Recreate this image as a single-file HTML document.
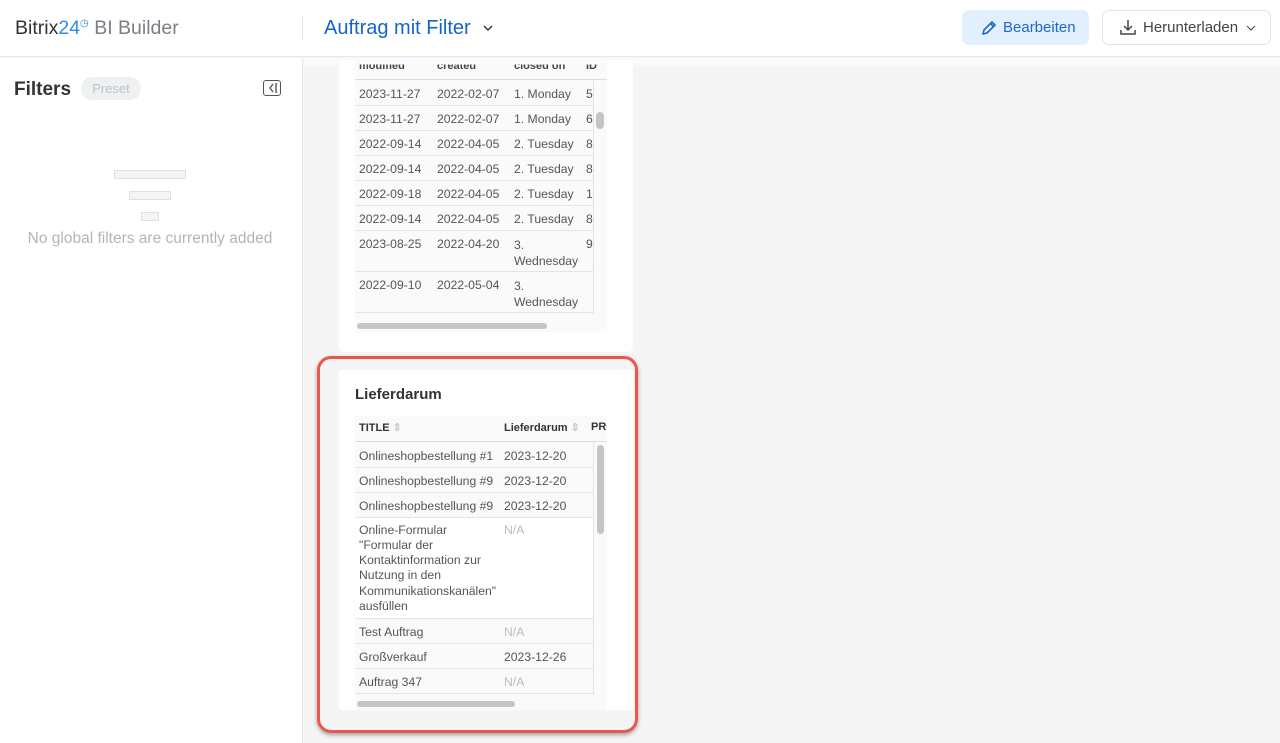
<!DOCTYPE html>
<html><head><meta charset="utf-8"><style>
*{box-sizing:border-box;margin:0;padding:0}
body{width:1280px;height:743px;overflow:hidden;font-family:"Liberation Sans",sans-serif;background:#f5f5f6;position:relative;color:#333}
.hdr{position:absolute;left:0;top:0;width:1280px;height:57px;background:#fff;border-bottom:1px solid #e6e8ea}
.side{position:absolute;left:0;top:58px;width:303px;height:685px;background:#fff;border-right:1px solid #e8e8e8}
.abs{position:absolute;white-space:nowrap}
.card{position:absolute;background:#fff;border-radius:4px}
.t{position:absolute;font-size:12.2px;color:#555;white-space:nowrap;margin-top:0.5px}
.hl{position:absolute;height:1px;background:#e4e4e4}
</style></head><body>
<div class="hdr">
 <div class="abs" style="left:15px;top:17px;font-size:19.5px;color:#333">Bitrix<span style="color:#2f8ce8">24</span><span style="color:#2f8ce8;font-size:10px;position:relative;top:-8px">&#9719;</span> <span style="color:#7a7f85">BI Builder</span></div>
 <div style="position:absolute;left:302px;top:16px;width:1px;height:24px;background:#e6e6e6"></div>
 <div class="abs" style="left:324px;top:17px;font-size:20px;color:#1565c9">Auftrag mit Filter</div>
 <svg class="abs" style="left:482px;top:23px" width="12" height="10"><path d="M2 3l4 4 4-4" stroke="#333" stroke-width="1.4" fill="none"/></svg>
 <div class="abs" style="left:962px;top:10px;width:127px;height:35px;background:#e2f0fd;border-radius:7px"></div>
 <svg class="abs" style="left:980px;top:19px" width="18" height="18"><path d="M3 15l1-4 8-8 3 3-8 8z M10.5 4.5l3 3" stroke="#1e68c8" stroke-width="1.6" fill="none" stroke-linejoin="round"/></svg>
 <div class="abs" style="left:1003px;top:19px;font-size:15px;color:#1e68c8">Bearbeiten</div>
 <div class="abs" style="left:1102px;top:10px;width:169px;height:35px;border:1px solid #e2e2e2;border-radius:7px"></div>
 <svg class="abs" style="left:1119px;top:18px" width="18" height="18"><path d="M9 2v10M5 8l4 4 4-4M2 12v4h14v-4" stroke="#444" stroke-width="1.5" fill="none"/></svg>
 <div class="abs" style="left:1143px;top:19px;font-size:15px;color:#444">Herunterladen</div>
 <svg class="abs" style="left:1245px;top:23px" width="12" height="10"><path d="M2 3l4 4 4-4" stroke="#555" stroke-width="1.2" fill="none"/></svg>
</div>
<div class="abs" style="left:304px;top:58px;width:976px;height:7px;background:#f8fafb"></div>
<div class="side">
 <div class="abs" style="left:14px;top:21px;font-size:19px;font-weight:bold;color:#333">Filters</div>
 <div class="abs" style="left:81px;top:19px;width:60px;height:23px;background:#eef0f1;border-radius:12px;font-size:13px;color:#bfc3c6;text-align:center;line-height:23px">Preset</div>
 <div class="abs" style="left:263px;top:22px;width:18px;height:16px;border:1.5px solid #555;border-radius:3px"></div>
 <svg class="abs" style="left:263px;top:22px" width="18" height="16"><path d="M10 4l-3 4 3 4M13 3v10" stroke="#555" stroke-width="1.4" fill="none"/></svg>
 <div class="abs" style="left:114px;top:112px;width:72px;height:9px;border:1px solid #e0e0e0;background:#f4f4f4"></div>
 <div class="abs" style="left:129px;top:133px;width:42px;height:9px;border:1px solid #e0e0e0;background:#f4f4f4"></div>
 <div class="abs" style="left:141px;top:154px;width:18px;height:9px;border:1px solid #e0e0e0;background:#f4f4f4"></div>
 <div class="abs" style="left:0;width:300px;text-align:center;top:172px;font-size:15.5px;color:#b2b5b8">No global filters are currently added</div>
</div>

<!-- card 1 -->
<div class="card" style="left:339px;top:60px;width:294px;height:292px;border-radius:0 0 5px 5px"></div>
<div class="abs" style="left:355px;top:60px;width:252px;height:272px;background:#fafafa"></div>
<div class="t" style="left:359px;top:59px;color:#444;font-weight:bold;font-size:11px;clip-path:inset(5px 0 0 0)">modified</div>
<div class="t" style="left:437px;top:59px;color:#444;font-weight:bold;font-size:11px;clip-path:inset(5px 0 0 0)">created</div>
<div class="t" style="left:514px;top:59px;color:#444;font-weight:bold;font-size:11px;clip-path:inset(5px 0 0 0)">closed on</div>
<div class="t" style="left:586px;top:59px;color:#444;font-weight:bold;font-size:11px;clip-path:inset(5px 0 0 0)">ID</div>
<div class="hl" style="left:355px;top:79px;width:252px;background:#ddd"></div>
<div class="abs" style="left:593px;top:80px;width:1px;height:235px;background:#e4e4e4"></div>
<div class="abs" style="left:596px;top:112px;width:8px;height:17px;background:#c4c4c4;border-radius:4px"></div>
<div class="t" style="left:359px;top:86px">2023-11-27</div><div class="t" style="left:437px;top:86px">2022-02-07</div><div class="t" style="left:514px;top:86px">1. Monday</div><div class="t" style="left:586px;top:86px">5</div>
<div class="hl" style="left:355px;top:105px;width:238px"></div>
<div class="t" style="left:359px;top:111px">2023-11-27</div><div class="t" style="left:437px;top:111px">2022-02-07</div><div class="t" style="left:514px;top:111px">1. Monday</div><div class="t" style="left:586px;top:111px">6</div>
<div class="hl" style="left:355px;top:130px;width:238px"></div>
<div class="t" style="left:359px;top:136px">2022-09-14</div><div class="t" style="left:437px;top:136px">2022-04-05</div><div class="t" style="left:514px;top:136px">2. Tuesday</div><div class="t" style="left:586px;top:136px">8</div>
<div class="hl" style="left:355px;top:155px;width:238px"></div>
<div class="t" style="left:359px;top:161px">2022-09-14</div><div class="t" style="left:437px;top:161px">2022-04-05</div><div class="t" style="left:514px;top:161px">2. Tuesday</div><div class="t" style="left:586px;top:161px">8</div>
<div class="hl" style="left:355px;top:180px;width:238px"></div>
<div class="t" style="left:359px;top:186px">2022-09-18</div><div class="t" style="left:437px;top:186px">2022-04-05</div><div class="t" style="left:514px;top:186px">2. Tuesday</div><div class="t" style="left:586px;top:186px">1</div>
<div class="hl" style="left:355px;top:205px;width:238px"></div>
<div class="t" style="left:359px;top:211px">2022-09-14</div><div class="t" style="left:437px;top:211px">2022-04-05</div><div class="t" style="left:514px;top:211px">2. Tuesday</div><div class="t" style="left:586px;top:211px">8</div>
<div class="hl" style="left:355px;top:230px;width:238px"></div>
<div class="t" style="left:359px;top:236px">2023-08-25</div><div class="t" style="left:437px;top:236px">2022-04-20</div><div class="t" style="left:514px;top:236px;line-height:16px">3.<br>Wednesday</div><div class="t" style="left:586px;top:236px">9</div>
<div class="hl" style="left:355px;top:271px;width:238px"></div>
<div class="t" style="left:359px;top:277px">2022-09-10</div><div class="t" style="left:437px;top:277px">2022-05-04</div><div class="t" style="left:514px;top:277px;line-height:16px">3.<br>Wednesday</div>
<div class="hl" style="left:355px;top:312px;width:238px"></div>
<div class="abs" style="left:357px;top:323px;width:190px;height:6px;background:#c4c4c4;border-radius:3px"></div>

<!-- card 2 -->
<div class="abs" style="left:317px;top:356px;width:321px;height:377px;border:3px solid #e8584c;border-radius:14px;box-shadow:0 2px 4px rgba(0,0,0,.35)"></div>
<div class="card" style="left:339px;top:370px;width:294px;height:340px"></div>
<div class="abs" style="left:355px;top:386px;font-size:15px;font-weight:bold;color:#333">Lieferdarum</div>
<div class="abs" style="left:355px;top:416px;width:252px;height:294px;background:#fafafa"></div>
<div class="t" style="left:359px;top:420px;font-weight:bold;color:#333;font-size:11px">TITLE <span style="color:#ccc">&#8661;</span></div>
<div class="t" style="left:504px;top:420px;font-weight:bold;color:#333;font-size:11px">Lieferdarum <span style="color:#ccc">&#8661;</span></div>
<div class="t" style="left:591px;top:420px;font-weight:bold;color:#333;font-size:11px;width:16px;overflow:hidden">PRO</div>
<div class="hl" style="left:355px;top:441px;width:252px;background:#ddd"></div>
<div class="abs" style="left:355px;top:442px;width:238px;height:252px;background:#fff"></div>
<div class="abs" style="left:593px;top:442px;width:1px;height:253px;background:#e4e4e4"></div>
<div class="abs" style="left:597px;top:445px;width:7px;height:89px;background:#c4c4c4;border-radius:4px"></div>
<div class="abs" style="left:355px;top:442px;width:238px;height:75px;background:#fafafa"></div>
<div class="t" style="left:359px;top:448px">Onlineshopbestellung #1</div><div class="t" style="left:504px;top:448px">2023-12-20</div>
<div class="hl" style="left:355px;top:467px;width:238px"></div>
<div class="t" style="left:359px;top:473px">Onlineshopbestellung #9</div><div class="t" style="left:504px;top:473px">2023-12-20</div>
<div class="hl" style="left:355px;top:492px;width:238px"></div>
<div class="t" style="left:359px;top:498px">Onlineshopbestellung #9</div><div class="t" style="left:504px;top:498px">2023-12-20</div>
<div class="hl" style="left:355px;top:517px;width:238px"></div>
<div class="t" style="left:359px;top:522px;line-height:15.3px">Online-Formular<br>"Formular der<br>Kontaktinformation zur<br>Nutzung in den<br>Kommunikationskanälen"<br>ausfüllen</div><div class="t" style="left:504px;top:522px;color:#bbb">N/A</div>
<div class="hl" style="left:355px;top:618px;width:238px"></div>
<div class="abs" style="left:355px;top:619px;width:238px;height:74px;background:#fafafa"></div>
<div class="t" style="left:359px;top:624px">Test Auftrag</div><div class="t" style="left:504px;top:624px;color:#bbb">N/A</div>
<div class="hl" style="left:355px;top:643px;width:238px"></div>
<div class="t" style="left:359px;top:649px">Großverkauf</div><div class="t" style="left:504px;top:649px">2023-12-26</div>
<div class="hl" style="left:355px;top:668px;width:238px"></div>
<div class="t" style="left:359px;top:674px">Auftrag 347</div><div class="t" style="left:504px;top:674px;color:#bbb">N/A</div>
<div class="hl" style="left:355px;top:693px;width:238px"></div>
<div class="abs" style="left:357px;top:701px;width:158px;height:6px;background:#c4c4c4;border-radius:3px"></div>
</body></html>
